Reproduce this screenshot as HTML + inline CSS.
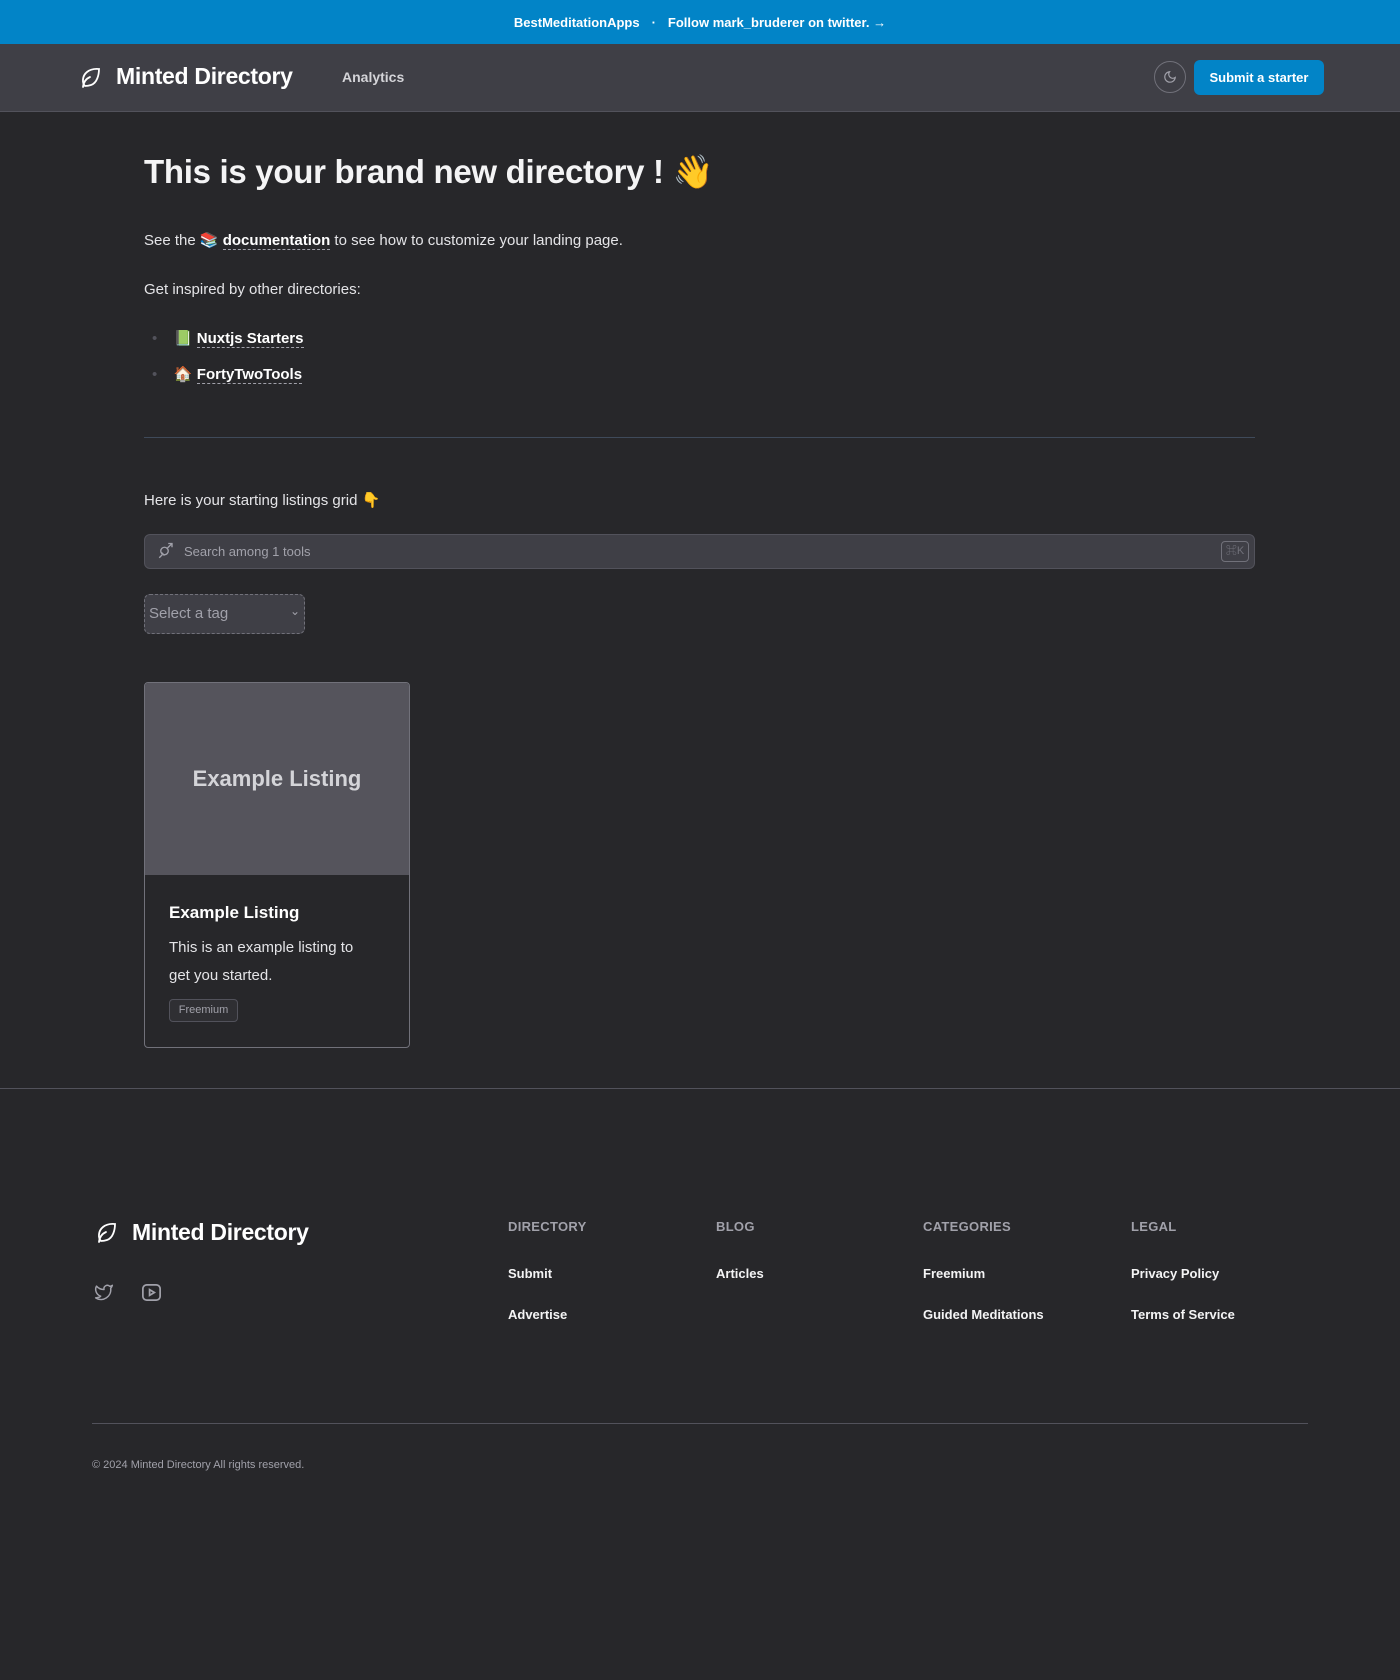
<!DOCTYPE html>
<html><head><meta charset="utf-8"><style>
*{margin:0;padding:0;box-sizing:border-box}
body{width:1400px;height:1680px;background:#27272a;font-family:"Liberation Sans","Noto Sans CJK JP",sans-serif;color:#e4e4e7;position:relative;overflow:hidden}
.a{position:absolute;white-space:nowrap}
.banner{left:0;top:0;width:1400px;height:44px;background:#0284c7;color:#fff;font-size:13px;font-weight:bold;display:flex;align-items:center;justify-content:center;gap:12px}
.nav{left:0;top:44px;width:1400px;height:68px;background:#3f3f46;border-bottom:1px solid #52525b}
.u{border-bottom:1px dashed #a1a1aa;color:#fff;font-weight:bold}
.col h4{font-size:13px;color:#a1a1aa;letter-spacing:.3px;font-weight:bold}
.lk{font-size:13px;color:#f4f4f5;font-weight:bold}
</style></head><body>
<div class="a banner"><span>BestMeditationApps</span><span>·</span><span>Follow mark_bruderer on twitter. →</span></div>
<div class="a nav"></div>
<svg class="a" style="left:78px;top:66px" width="24" height="24" viewBox="0 0 24 24" fill="none" stroke="#fff" stroke-width="1.8" stroke-linecap="round"><path d="M5 21c.5-4.5 2.5-8 7-10"/><path d="M7 20C4 17 4 10 9 6s11-3 12-3c0 6-2 14-8 16-3 1-5 1-6 1z"/></svg>
<div class="a" style="left:116px;top:63px;font-size:23px;font-weight:bold;color:#fff;letter-spacing:-0.3px">Minted Directory</div>
<div class="a" style="left:342px;top:69px;font-size:14px;font-weight:bold;color:#d4d4d8">Analytics</div>
<div class="a" style="left:1154px;top:61px;width:32px;height:32px;border:1px solid #71717a;border-radius:50%"></div>
<svg class="a" style="left:1163px;top:70px" width="14" height="14" viewBox="0 0 24 24" fill="none" stroke="#a1a1aa" stroke-width="2"><path d="M21 12.8A9 9 0 1 1 11.2 3 7 7 0 0 0 21 12.8z"/></svg>
<div class="a" style="left:1194px;top:60px;width:130px;height:35px;background:#0284c7;border-radius:6px;color:#fff;font-size:13px;font-weight:bold;text-align:center;line-height:35px">Submit a starter</div>

<div class="a" style="left:144px;top:153px;font-size:33px;font-weight:bold;color:#f4f4f5;letter-spacing:-0.3px">This is your brand new directory ! 👋</div>
<div class="a" style="left:144px;top:231px;font-size:15px">See the 📚 <span class="u">documentation</span> to see how to customize your landing page.</div>
<div class="a" style="left:144px;top:281px;font-size:15px">Get inspired by other directories:</div>
<div class="a" style="left:152px;top:329px;font-size:15px"><span style="color:#52525b">•</span>&nbsp;&nbsp;&nbsp;&nbsp;📗 <span class="u">Nuxtjs Starters</span></div>
<div class="a" style="left:152px;top:365px;font-size:15px"><span style="color:#52525b">•</span>&nbsp;&nbsp;&nbsp;&nbsp;🏠 <span class="u">FortyTwoTools</span></div>
<div class="a" style="left:144px;top:437px;width:1111px;height:1px;background:#3f4a5a"></div>
<div class="a" style="left:144px;top:491px;font-size:15px">Here is your starting listings grid 👇</div>
<div class="a" style="left:144px;top:534px;width:1111px;height:35px;background:#3f3f46;border:1px solid #52525b;border-radius:6px"></div>
<svg class="a" style="left:157px;top:542px" width="18" height="18" viewBox="0 0 24 24" fill="none" stroke="#a1a1aa" stroke-width="1.8"><circle cx="10" cy="12" r="5"/><path d="M14 8l6-6M15 2h5v5M3 21l4-4M6 14l4 4"/></svg>
<div class="a" style="left:184px;top:544px;font-size:13px;color:#a1a1aa">Search among 1 tools</div>
<div class="a" style="left:1221px;top:541px;width:28px;height:21px;border:1px solid #71717a;border-radius:4px;font-size:11px;color:#71717a;text-align:center;line-height:19px">⌘K</div>
<div class="a" style="left:144px;top:594px;width:161px;height:40px;background:#3f3f46;border:1px dashed #71717a;border-radius:6px"></div>
<div class="a" style="left:149px;top:605px;font-size:15px;color:#a1a1aa">Select a tag</div>
<div class="a" style="left:290px;top:604px;font-size:12px;color:#a1a1aa">⌄</div>

<div class="a" style="left:144px;top:682px;width:266px;height:366px;border:1px solid #71717a;border-radius:4px;overflow:hidden">
<div style="height:192px;background:#55545c;display:flex;align-items:center;justify-content:center;font-size:22px;font-weight:bold;color:#d4d4d8">Example Listing</div>
</div>
<div class="a" style="left:169px;top:903px;font-size:17px;font-weight:bold;color:#fff">Example Listing</div>
<div class="a" style="left:169px;top:934px;font-size:15px;line-height:28px;color:#e4e4e7;white-space:normal;width:200px">This is an example listing to get you started.</div>
<div class="a" style="left:169px;top:999px;width:69px;height:23px;border:1px solid #52525b;background:#2f2f33;border-radius:4px;font-size:11px;color:#a1a1aa;text-align:center;line-height:21px">Freemium</div>

<div class="a" style="left:0;top:1088px;width:1400px;height:1px;background:#52525b"></div>
<svg class="a" style="left:94px;top:1221px" width="24" height="24" viewBox="0 0 24 24" fill="none" stroke="#fff" stroke-width="1.8" stroke-linecap="round"><path d="M5 21c.5-4.5 2.5-8 7-10"/><path d="M7 20C4 17 4 10 9 6s11-3 12-3c0 6-2 14-8 16-3 1-5 1-6 1z"/></svg>
<div class="a" style="left:132px;top:1219px;font-size:23px;font-weight:bold;color:#fff;letter-spacing:-0.3px">Minted Directory</div>
<svg class="a" style="left:93px;top:1282px" width="22" height="20" viewBox="0 0 24 24" fill="none" stroke="#a1a1aa" stroke-width="1.8" stroke-linejoin="round"><path d="M22 4s-.7 2.1-2 3.4c1.6 10-9.4 17.3-18 11.6 2.2.1 4.4-.6 6-2C3 15.5.5 9.6 3 5c2.2 2.6 5.6 4.1 9 4-.9-4.2 4-6.6 7-3.8 1.1 0 3-1.2 3-1.2z"/></svg>
<svg class="a" style="left:140px;top:1281px" width="23" height="23" viewBox="0 0 24 24" fill="none" stroke="#a1a1aa" stroke-width="1.8"><rect x="3" y="4" width="18" height="16" rx="4"/><path d="M10 9l5 3-5 3z"/></svg>
<div class="a col" style="left:508px;top:1219px"><h4>DIRECTORY</h4></div>
<div class="a lk" style="left:508px;top:1266px">Submit</div>
<div class="a lk" style="left:508px;top:1307px">Advertise</div>
<div class="a col" style="left:716px;top:1219px"><h4>BLOG</h4></div>
<div class="a lk" style="left:716px;top:1266px">Articles</div>
<div class="a col" style="left:923px;top:1219px"><h4>CATEGORIES</h4></div>
<div class="a lk" style="left:923px;top:1266px">Freemium</div>
<div class="a lk" style="left:923px;top:1307px">Guided Meditations</div>
<div class="a col" style="left:1131px;top:1219px"><h4>LEGAL</h4></div>
<div class="a lk" style="left:1131px;top:1266px">Privacy Policy</div>
<div class="a lk" style="left:1131px;top:1307px">Terms of Service</div>
<div class="a" style="left:92px;top:1423px;width:1216px;height:1px;background:#52525b"></div>
<div class="a" style="left:92px;top:1459px;font-size:11px;color:#a1a1aa">© 2024 Minted Directory All rights reserved.</div>
</body></html>
